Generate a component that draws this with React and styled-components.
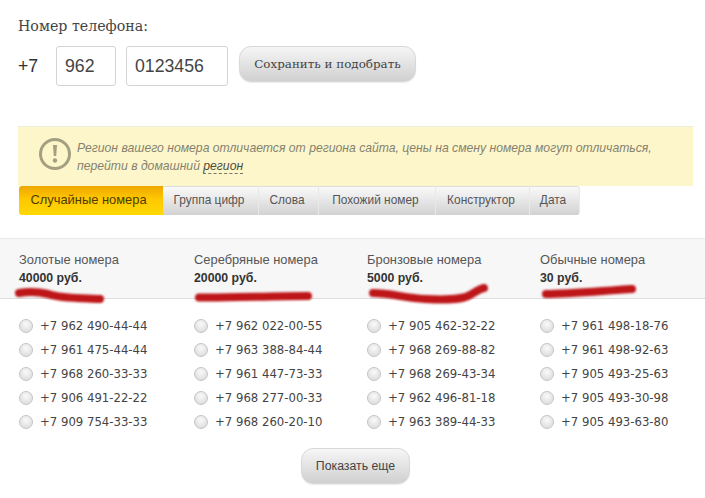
import React from "react"
import styled, { createGlobalStyle } from "styled-components"

const GlobalStyle = createGlobalStyle`
  html, body {
    margin: 0;
    background: #fff;
    font-family: "Liberation Sans", Arial, sans-serif;
    color: #333;
  }
`

const Page = styled.div`
  width: 705px;
  height: 498px;
  overflow: hidden;
  position: relative;
`

const PhoneForm = styled.section`
  padding: 16px 0 0 18px;
  height: 110px;
  box-sizing: border-box;
`

const FormLabel = styled.div`
  font-family: "DejaVu Serif", serif;
  font-size: 14.2px;
  line-height: 20px;
  color: #444;
`

const FormRow = styled.div`
  display: flex;
  align-items: center;
  margin-top: 10px;
`

const Prefix = styled.span`
  font-size: 17.7px;
  width: 38px;
  color: #333;
`

const PhoneInput = styled.div`
  box-sizing: border-box;
  width: ${p => p.$w}px;
  height: 40px;
  margin-right: ${p => p.$gap}px;
  padding-left: ${p => p.$pad}px;
  border: 1px solid #d4d4d4;
  border-radius: 3px;
  font-size: 17.7px;
  line-height: 38px;
  color: #444;
`

const GreyButton = styled.button`
  box-sizing: border-box;
  height: 36px;
  border: 1px solid #d8d8d8;
  border-radius: 12px;
  background: linear-gradient(#f6f6f6, #d0d0d0);
  color: #444;
  padding: 0;
  box-shadow: 0 1px 1px rgba(0, 0, 0, 0.08);
`

const SaveButton = styled(GreyButton)`
  width: 177px;
  margin-top: -4px;
  font-family: "DejaVu Serif", serif;
  font-size: 11.9px;
`

const Notice = styled.div`
  box-sizing: border-box;
  margin: 16px 12px 0 18px;
  height: 60px;
  display: flex;
  align-items: flex-start;
  padding: 10px 0 0 20px;
  gap: 5px;
  background: #fdf6cb;
  border-top: 1px solid #eeeedd;
`

const NoticeText = styled.p`
  margin: 2px 0 0;
  width: 600px;
  font-style: italic;
  font-size: 12.2px;
  line-height: 18px;
  color: #85826e;
`

const RegionLink = styled.span`
  color: #4c4a3a;
  border-bottom: 1px dashed #77745f;
`

const Tabs = styled.nav`
  display: flex;
  margin-left: 19px;
  height: 29px;
`

const Tab = styled.div`
  box-sizing: border-box;
  width: ${p => p.$w}px;
  padding-right: ${p => (p.$active ? 5 : 3)}px;
  text-align: center;
  font-size: ${p => (p.$active ? 12.9 : 11.9)}px;
  line-height: 28px;
  color: ${p => (p.$active ? "#4d3a00" : "#555")};
  background: ${p =>
    p.$active ? "linear-gradient(#eea600, #ffc800 45%, #ffd800)" : "linear-gradient(#fbfbfb, #d2d2d2)"};
  border-right: ${p => (p.$active ? "none" : "1px solid #e9e9e9")};
  border-radius: ${p => (p.$active ? "3px 0 0 3px" : p.$last ? "0 3px 3px 0" : "0")};
  box-shadow: ${p => (p.$active ? "none" : "inset 0 1px 0 #ddd")};
`

const PriceBand = styled.div`
  position: relative;
  box-sizing: border-box;
  height: 61px;
  margin-top: 23px;
  padding-top: 12px;
  display: grid;
  grid-template-columns: 175px 173px 173px 1fr;
  padding-left: 19px;
  background: #f7f7f8;
  border-top: 1px solid #e8e8e8;
  border-bottom: 1px solid #dedede;
`

const PriceName = styled.div`
  font-size: 12.9px;
  line-height: 18px;
  color: #555;
`

const PriceValue = styled.div`
  font-size: 12.3px;
  line-height: 18px;
  font-weight: bold;
  color: #333;
`

const Marks = styled.svg`
  position: absolute;
  left: 0;
  top: -1px;
  pointer-events: none;
  filter: blur(0.8px);
`

const Numbers = styled.div`
  display: grid;
  grid-template-columns: 175px 173px 173px 1fr;
  padding: 15px 0 0 19px;
`

const Column = styled.div`
  display: flex;
  flex-direction: column;
`

const NumberRow = styled.label`
  display: flex;
  align-items: center;
  height: 24px;
  gap: 7px;
  font-family: "DejaVu Sans", sans-serif;
  font-size: 11.7px;
  color: #444;
`

const Radio = styled.span`
  box-sizing: border-box;
  width: 14px;
  height: 14px;
  border-radius: 50%;
  border: 1px solid #c4c4c4;
  background: radial-gradient(circle at 50% 35%, #fafafa, #d6d6d6);
`

const MoreRow = styled.div`
  display: flex;
  justify-content: center;
  margin-top: 14px;
  padding-left: 6px;
`

const MoreButton = styled(GreyButton)`
  width: 109px;
  font-family: "Liberation Sans", sans-serif;
  font-size: 12.3px;
`

const columns = [
  { name: "Золотые номера", price: "40000 руб.", numbers: ["+7 962 490-44-44", "+7 961 475-44-44", "+7 968 260-33-33", "+7 906 491-22-22", "+7 909 754-33-33"] },
  { name: "Серебряные номера", price: "20000 руб.", numbers: ["+7 962 022-00-55", "+7 963 388-84-44", "+7 961 447-73-33", "+7 968 277-00-33", "+7 968 260-20-10"] },
  { name: "Бронзовые номера", price: "5000 руб.", numbers: ["+7 905 462-32-22", "+7 968 269-88-82", "+7 968 269-43-34", "+7 962 496-81-18", "+7 963 389-44-33"] },
  { name: "Обычные номера", price: "30 руб.", numbers: ["+7 961 498-18-76", "+7 961 498-92-63", "+7 905 493-25-63", "+7 905 493-30-98", "+7 905 493-63-80"] },
]

const tabs = [
  { label: "Случайные номера", w: 144, active: true },
  { label: "Группа цифр", w: 96 },
  { label: "Слова", w: 60 },
  { label: "Похожий номер", w: 117 },
  { label: "Конструктор", w: 94 },
  { label: "Дата", w: 50, last: true },
]

const WarningIcon = () => (
  <svg width="34" height="34" viewBox="0 0 34 34" style={{ flex: "none" }}>
    <circle cx="17" cy="17" r="14.5" fill="none" stroke="#a39f80" strokeWidth="3" />
    <path d="M15 8h4l-.8 11h-2.4z" fill="#a39f80" />
    <circle cx="17" cy="23.5" r="2.2" fill="#a39f80" />
  </svg>
)

// Red marker strokes over the prices, coordinates are relative to the band
const RedMarks = () => (
  <Marks width="705" height="70" viewBox="0 0 705 70">
    <g fill="none" stroke="#bd1518" strokeWidth="8" strokeLinecap="round" strokeLinejoin="round">
      <path d="M19 55 C30 53 40 54 48 56 C62 61 85 60 100 61" />
      <path d="M199 59.5 C230 60 270 58 308 58" />
      <path d="M373 55 C390 55 405 60 425 61 C445 62 462 62 470 57 C475 54 479 51 484 50" />
      <path d="M546 56 C570 56 600 53 632 51" />
    </g>
  </Marks>
)

const App = () => (
  <Page>
    <GlobalStyle />
    <PhoneForm>
      <FormLabel>Номер телефона:</FormLabel>
      <FormRow>
        <Prefix>+7</Prefix>
        <PhoneInput $w={60} $gap={10} $pad={8}>962</PhoneInput>
        <PhoneInput $w={102} $gap={11} $pad={8}>0123456</PhoneInput>
        <SaveButton>Сохранить и подобрать</SaveButton>
      </FormRow>
    </PhoneForm>
    <Notice>
      <WarningIcon />
      <NoticeText>
        Регион вашего номера отличается от региона сайта, цены на смену номера могут отличаться,
        <br />
        перейти в домашний <RegionLink>регион</RegionLink>
      </NoticeText>
    </Notice>
    <Tabs>
      {tabs.map(t => (
        <Tab key={t.label} $w={t.w} $active={t.active} $last={t.last}>{t.label}</Tab>
      ))}
    </Tabs>
    <PriceBand>
      {columns.map(c => (
        <div key={c.name}>
          <PriceName>{c.name}</PriceName>
          <PriceValue>{c.price}</PriceValue>
        </div>
      ))}
      <RedMarks />
    </PriceBand>
    <Numbers>
      {columns.map(c => (
        <Column key={c.name}>
          {c.numbers.map(n => (
            <NumberRow key={n}>
              <Radio />
              {n}
            </NumberRow>
          ))}
        </Column>
      ))}
    </Numbers>
    <MoreRow>
      <MoreButton>Показать еще</MoreButton>
    </MoreRow>
  </Page>
)

export default App
